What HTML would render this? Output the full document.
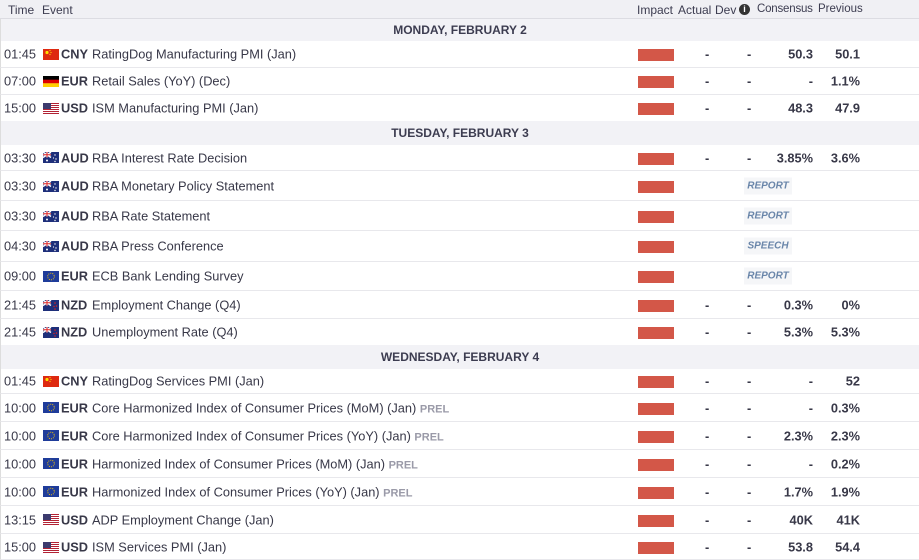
<!DOCTYPE html><html><head><style>
*{margin:0;padding:0;box-sizing:border-box}
body{width:919px;height:559px;overflow:hidden;background:#fff;font-family:"Liberation Sans",sans-serif;color:#383848;font-size:12.8px;position:relative}
.hd{position:absolute;left:0;top:0;width:919px;height:19px;background:#f0f0f4;border-bottom:1px solid #dcdce2;font-size:12px;color:#3c3c50}
.hd span{position:absolute;top:3px}
.day{position:absolute;left:0;width:919px;background:#f2f2f6;font-weight:bold;font-size:12px;text-align:center;color:#3c3c50;border-left:1px solid #ddd}
.r{position:absolute;left:0;width:919px;border-bottom:1px solid #e8e8ec;border-left:1px solid #ddd}
.r span{position:absolute;top:50%;transform:translateY(-50%);white-space:nowrap}
.t{right:883px}
.f{left:42px;width:16px;height:11px}
.c{left:60px;font-weight:bold}
.e{left:91px}
.p{color:#9a9aa8;font-weight:bold;font-size:11px}
.i{left:637px;width:36px;height:12px;background:#d35748;margin-top:1px}
.a{left:704px;font-weight:bold}
.d{left:746px;font-weight:bold}
.cs{right:106px;font-weight:bold}
.pv{right:59px;font-weight:bold}
.b{left:743px;width:48px;height:17px;background:#f5f6f8;color:#6a86aa;font-style:italic;font-weight:bold;font-size:10px;text-align:center;line-height:17px}
</style></head><body>
<div class="hd"><span style="left:8px">Time</span><span style="left:42px">Event</span><span style="left:637px">Impact</span><span style="left:678px">Actual</span><span style="left:715px">Dev</span><span style="left:739px;top:4px;width:11px;height:11px;border-radius:50%;background:#333;color:#fff;font-size:9px;font-weight:bold;text-align:center;line-height:11px">i</span><span style="left:757px;font-size:11.5px;letter-spacing:-0.2px">Consensus</span><span style="left:818px;font-size:11.5px">Previous</span></div>

<div class="day" style="top:19px;height:22px;line-height:22px">MONDAY, FEBRUARY 2</div>
<div class="day" style="top:121px;height:24px;line-height:24px">TUESDAY, FEBRUARY 3</div>
<div class="day" style="top:345px;height:24px;line-height:24px">WEDNESDAY, FEBRUARY 4</div>

<svg width="0" height="0" style="position:absolute"><defs>
<symbol id="cn" viewBox="0 0 16 11"><rect width="16" height="11" fill="#de2910"/><circle cx="4" cy="3.5" r="1.6" fill="#ffde00"/><circle cx="7" cy="1.5" r=".6" fill="#ffde00"/><circle cx="8" cy="3.5" r=".6" fill="#ffde00"/><circle cx="7" cy="5.5" r=".6" fill="#ffde00"/></symbol>
<symbol id="de" viewBox="0 0 16 11"><rect width="16" height="4" fill="#000"/><rect y="3.7" width="16" height="3.7" fill="#dd0000"/><rect y="7.3" width="16" height="3.7" fill="#ffce00"/></symbol>
<symbol id="us" viewBox="0 0 16 11"><rect width="16" height="11" fill="#fff"/><g fill="#b22234"><rect width="16" height="1"/><rect y="2" width="16" height="1"/><rect y="4" width="16" height="1"/><rect y="6" width="16" height="1"/><rect y="8" width="16" height="1"/><rect y="10" width="16" height="1"/></g><rect width="8" height="6" fill="#3c3b6e"/></symbol>
<symbol id="au" viewBox="0 0 16 11"><rect width="16" height="11" fill="#1e2f7a"/><path d="M0 0L8 5.5M8 0L0 5.5" stroke="#fff" stroke-width="1.4"/><path d="M4 0V5.5M0 2.75H8" stroke="#fff" stroke-width="1.8"/><path d="M4 0V5.5M0 2.75H8" stroke="#d22" stroke-width="1"/><circle cx="4" cy="8.5" r="1" fill="#fff"/><circle cx="12" cy="3" r=".7" fill="#fff"/><circle cx="13" cy="7" r=".7" fill="#fff"/><circle cx="10.5" cy="6" r=".6" fill="#fff"/><circle cx="12" cy="9.5" r=".7" fill="#fff"/></symbol>
<symbol id="eu" viewBox="0 0 16 11"><rect width="16" height="11" fill="#1f3c9a"/><circle cx="8" cy="5.5" r="3.3" fill="none" stroke="#ffcc00" stroke-width=".9" stroke-dasharray="1 1.1"/></symbol>
<symbol id="nz" viewBox="0 0 16 11"><rect width="16" height="11" fill="#1e2f7a"/><path d="M0 0L8 5.5M8 0L0 5.5" stroke="#fff" stroke-width="1.4"/><path d="M4 0V5.5M0 2.75H8" stroke="#fff" stroke-width="1.8"/><path d="M4 0V5.5M0 2.75H8" stroke="#d22" stroke-width="1"/><circle cx="12" cy="3" r=".8" fill="#d22"/><circle cx="13.5" cy="6" r=".8" fill="#d22"/><circle cx="11" cy="6.5" r=".7" fill="#d22"/><circle cx="12" cy="9" r=".8" fill="#d22"/></symbol>
</defs></svg>

<div class="r" style="top:41px;height:27px"><span class="t">01:45</span><svg class="f" style="position:absolute;top:8px"><use href="#cn"/></svg><span class="c">CNY</span><span class="e">RatingDog Manufacturing PMI (Jan)</span><span class="i"></span><span class="a">-</span><span class="d">-</span><span class="cs">50.3</span><span class="pv">50.1</span></div>
<div class="r" style="top:68px;height:27px"><span class="t">07:00</span><svg class="f" style="position:absolute;top:8px"><use href="#de"/></svg><span class="c">EUR</span><span class="e">Retail Sales (YoY) (Dec)</span><span class="i"></span><span class="a">-</span><span class="d">-</span><span class="cs">-</span><span class="pv">1.1%</span></div>
<div class="r" style="top:95px;height:26px;border-bottom:none"><span class="t">15:00</span><svg class="f" style="position:absolute;top:8px"><use href="#us"/></svg><span class="c">USD</span><span class="e">ISM Manufacturing PMI (Jan)</span><span class="i"></span><span class="a">-</span><span class="d">-</span><span class="cs">48.3</span><span class="pv">47.9</span></div>

<div class="r" style="top:145px;height:26px"><span class="t">03:30</span><svg class="f" style="position:absolute;top:7px"><use href="#au"/></svg><span class="c">AUD</span><span class="e">RBA Interest Rate Decision</span><span class="i"></span><span class="a">-</span><span class="d">-</span><span class="cs">3.85%</span><span class="pv">3.6%</span></div>
<div class="r" style="top:171px;height:30px"><span class="t">03:30</span><svg class="f" style="position:absolute;top:10px"><use href="#au"/></svg><span class="c">AUD</span><span class="e">RBA Monetary Policy Statement</span><span class="i"></span><span class="b">REPORT</span></div>
<div class="r" style="top:201px;height:30px"><span class="t">03:30</span><svg class="f" style="position:absolute;top:10px"><use href="#au"/></svg><span class="c">AUD</span><span class="e">RBA Rate Statement</span><span class="i"></span><span class="b">REPORT</span></div>
<div class="r" style="top:231px;height:31px"><span class="t">04:30</span><svg class="f" style="position:absolute;top:10px"><use href="#au"/></svg><span class="c">AUD</span><span class="e">RBA Press Conference</span><span class="i"></span><span class="b">SPEECH</span></div>
<div class="r" style="top:262px;height:29px"><span class="t">09:00</span><svg class="f" style="position:absolute;top:9px"><use href="#eu"/></svg><span class="c">EUR</span><span class="e">ECB Bank Lending Survey</span><span class="i"></span><span class="b">REPORT</span></div>
<div class="r" style="top:291px;height:28px"><span class="t">21:45</span><svg class="f" style="position:absolute;top:9px"><use href="#nz"/></svg><span class="c">NZD</span><span class="e">Employment Change (Q4)</span><span class="i"></span><span class="a">-</span><span class="d">-</span><span class="cs">0.3%</span><span class="pv">0%</span></div>
<div class="r" style="top:319px;height:26px;border-bottom:none"><span class="t">21:45</span><svg class="f" style="position:absolute;top:8px"><use href="#nz"/></svg><span class="c">NZD</span><span class="e">Unemployment Rate (Q4)</span><span class="i"></span><span class="a">-</span><span class="d">-</span><span class="cs">5.3%</span><span class="pv">5.3%</span></div>

<div class="r" style="top:369px;height:25px"><span class="t">01:45</span><svg class="f" style="position:absolute;top:7px"><use href="#cn"/></svg><span class="c">CNY</span><span class="e">RatingDog Services PMI (Jan)</span><span class="i"></span><span class="a">-</span><span class="d">-</span><span class="cs">-</span><span class="pv">52</span></div>
<div class="r" style="top:394px;height:28px"><span class="t">10:00</span><svg class="f" style="position:absolute;top:8px"><use href="#eu"/></svg><span class="c">EUR</span><span class="e">Core Harmonized Index of Consumer Prices (MoM) (Jan) <b class="p">PREL</b></span><span class="i"></span><span class="a">-</span><span class="d">-</span><span class="cs">-</span><span class="pv">0.3%</span></div>
<div class="r" style="top:422px;height:28px"><span class="t">10:00</span><svg class="f" style="position:absolute;top:8px"><use href="#eu"/></svg><span class="c">EUR</span><span class="e">Core Harmonized Index of Consumer Prices (YoY) (Jan) <b class="p">PREL</b></span><span class="i"></span><span class="a">-</span><span class="d">-</span><span class="cs">2.3%</span><span class="pv">2.3%</span></div>
<div class="r" style="top:450px;height:28px"><span class="t">10:00</span><svg class="f" style="position:absolute;top:8px"><use href="#eu"/></svg><span class="c">EUR</span><span class="e">Harmonized Index of Consumer Prices (MoM) (Jan) <b class="p">PREL</b></span><span class="i"></span><span class="a">-</span><span class="d">-</span><span class="cs">-</span><span class="pv">0.2%</span></div>
<div class="r" style="top:478px;height:28px"><span class="t">10:00</span><svg class="f" style="position:absolute;top:8px"><use href="#eu"/></svg><span class="c">EUR</span><span class="e">Harmonized Index of Consumer Prices (YoY) (Jan) <b class="p">PREL</b></span><span class="i"></span><span class="a">-</span><span class="d">-</span><span class="cs">1.7%</span><span class="pv">1.9%</span></div>
<div class="r" style="top:506px;height:28px"><span class="t">13:15</span><svg class="f" style="position:absolute;top:8px"><use href="#us"/></svg><span class="c">USD</span><span class="e">ADP Employment Change (Jan)</span><span class="i"></span><span class="a">-</span><span class="d">-</span><span class="cs">40K</span><span class="pv">41K</span></div>
<div class="r" style="top:534px;height:26px"><span class="t">15:00</span><svg class="f" style="position:absolute;top:8px"><use href="#us"/></svg><span class="c">USD</span><span class="e">ISM Services PMI (Jan)</span><span class="i"></span><span class="a">-</span><span class="d">-</span><span class="cs">53.8</span><span class="pv">54.4</span></div>
</body></html>
